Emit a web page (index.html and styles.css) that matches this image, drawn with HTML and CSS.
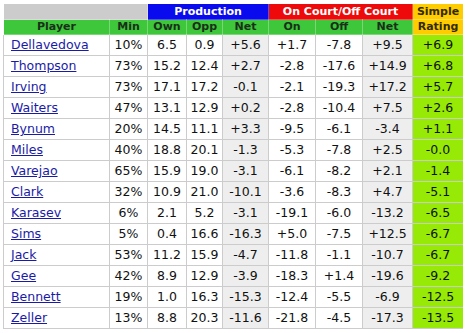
FILE: index.html
```html
<!DOCTYPE html>
<html lang="en">
<head>
    <meta charset="UTF-8">
    <meta name="viewport" content="width=device-width, initial-scale=1.0">
    <title>Simple Rating</title>
    <link rel="stylesheet" href="styles.css">
</head>
<body>

    <table class="ratings">
        <colgroup>
            <col class="c-player">
            <col class="c-min">
            <col class="c-own">
            <col class="c-opp">
            <col class="c-net">
            <col class="c-on">
            <col class="c-off">
            <col class="c-net2">
            <col class="c-rating">
        </colgroup>
        <thead>
            <tr class="group-row">
                <th colspan="2" class="grp-blank"></th>
                <th colspan="3" class="grp-prod">Production</th>
                <th colspan="3" class="grp-court">On Court/Off Court</th>
                <th class="grp-simple">Simple</th>
            </tr>
            <tr class="label-row">
                <th>Player</th>
                <th>Min</th>
                <th>Own</th>
                <th>Opp</th>
                <th>Net</th>
                <th>On</th>
                <th>Off</th>
                <th>Net</th>
                <th class="grp-simple">Rating</th>
            </tr>
        </thead>
        <tbody>
            <tr><td class="name"><a href="#">Dellavedova</a></td><td>10%</td><td>6.5</td><td>0.9</td><td class="net">+5.6</td><td>+1.7</td><td>-7.8</td><td class="net">+9.5</td><td class="rating">+6.9</td></tr>
            <tr><td class="name"><a href="#">Thompson</a></td><td>73%</td><td>15.2</td><td>12.4</td><td class="net">+2.7</td><td>-2.8</td><td>-17.6</td><td class="net">+14.9</td><td class="rating">+6.8</td></tr>
            <tr><td class="name"><a href="#">Irving</a></td><td>73%</td><td>17.1</td><td>17.2</td><td class="net">-0.1</td><td>-2.1</td><td>-19.3</td><td class="net">+17.2</td><td class="rating">+5.7</td></tr>
            <tr><td class="name"><a href="#">Waiters</a></td><td>47%</td><td>13.1</td><td>12.9</td><td class="net">+0.2</td><td>-2.8</td><td>-10.4</td><td class="net">+7.5</td><td class="rating">+2.6</td></tr>
            <tr><td class="name"><a href="#">Bynum</a></td><td>20%</td><td>14.5</td><td>11.1</td><td class="net">+3.3</td><td>-9.5</td><td>-6.1</td><td class="net">-3.4</td><td class="rating">+1.1</td></tr>
            <tr><td class="name"><a href="#">Miles</a></td><td>40%</td><td>18.8</td><td>20.1</td><td class="net">-1.3</td><td>-5.3</td><td>-7.8</td><td class="net">+2.5</td><td class="rating">-0.0</td></tr>
            <tr><td class="name"><a href="#">Varejao</a></td><td>65%</td><td>15.9</td><td>19.0</td><td class="net">-3.1</td><td>-6.1</td><td>-8.2</td><td class="net">+2.1</td><td class="rating">-1.4</td></tr>
            <tr><td class="name"><a href="#">Clark</a></td><td>32%</td><td>10.9</td><td>21.0</td><td class="net">-10.1</td><td>-3.6</td><td>-8.3</td><td class="net">+4.7</td><td class="rating">-5.1</td></tr>
            <tr><td class="name"><a href="#">Karasev</a></td><td>6%</td><td>2.1</td><td>5.2</td><td class="net">-3.1</td><td>-19.1</td><td>-6.0</td><td class="net">-13.2</td><td class="rating">-6.5</td></tr>
            <tr><td class="name"><a href="#">Sims</a></td><td>5%</td><td>0.4</td><td>16.6</td><td class="net">-16.3</td><td>+5.0</td><td>-7.5</td><td class="net">+12.5</td><td class="rating">-6.7</td></tr>
            <tr><td class="name"><a href="#">Jack</a></td><td>53%</td><td>11.2</td><td>15.9</td><td class="net">-4.7</td><td>-11.8</td><td>-1.1</td><td class="net">-10.7</td><td class="rating">-6.7</td></tr>
            <tr><td class="name"><a href="#">Gee</a></td><td>42%</td><td>8.9</td><td>12.9</td><td class="net">-3.9</td><td>-18.3</td><td>+1.4</td><td class="net">-19.6</td><td class="rating">-9.2</td></tr>
            <tr><td class="name"><a href="#">Bennett</a></td><td>19%</td><td>1.0</td><td>16.3</td><td class="net">-15.3</td><td>-12.4</td><td>-5.5</td><td class="net">-6.9</td><td class="rating">-12.5</td></tr>
            <tr><td class="name"><a href="#">Zeller</a></td><td>13%</td><td>8.8</td><td>20.3</td><td class="net">-11.6</td><td>-21.8</td><td>-4.5</td><td class="net">-17.3</td><td class="rating">-13.5</td></tr>
        </tbody>
    </table>

</body>
</html>
```

FILE: styles.css
```css
body {
    font-family: "DejaVu Sans", Verdana, sans-serif;
    margin: 3px;
    background: #fff;
}

.ratings {
    border-collapse: collapse;
    table-layout: fixed;
    width: 460px;
}

.c-player { width: 106px; }
.c-min { width: 38px; }
.c-own { width: 39px; }
.c-opp { width: 36px; }
.c-net { width: 46px; }
.c-on { width: 47px; }
.c-off { width: 47px; }
.c-net2 { width: 50px; }
.c-rating { width: 51px; }

.ratings th {
    font-size: 11px;
    font-weight: bold;
    padding: 0;
    text-align: center;
    white-space: nowrap;
    border: 1px solid rgba(255, 255, 255, 0.3);
}

.group-row th {
    height: 15px;
    line-height: 15px;
    color: #fff;
}

.label-row th {
    height: 14px;
    line-height: 14px;
    background-color: #3ec73a;
    color: #1a301a;
}

.grp-blank {
    background-color: #cccccc;
}

.grp-prod {
    background-color: #0a0aee;
}

.grp-court {
    background-color: #ee0a0a;
}

.ratings th.grp-simple {
    background-color: #ffcc00;
    color: #332a00;
}

.ratings td {
    font-size: 12.5px;
    color: #111;
    text-align: center;
    height: 20px;
    line-height: 20px;
    padding: 0;
    border: 1px solid #cccccc;
    white-space: nowrap;
}

.ratings td.name {
    text-align: left;
    padding-left: 7px;
}

.name a {
    color: #1a1aa8;
}

.ratings td.net {
    background-color: #eeeeee;
}

.ratings td.rating {
    background-color: #96ea06;
}
```
